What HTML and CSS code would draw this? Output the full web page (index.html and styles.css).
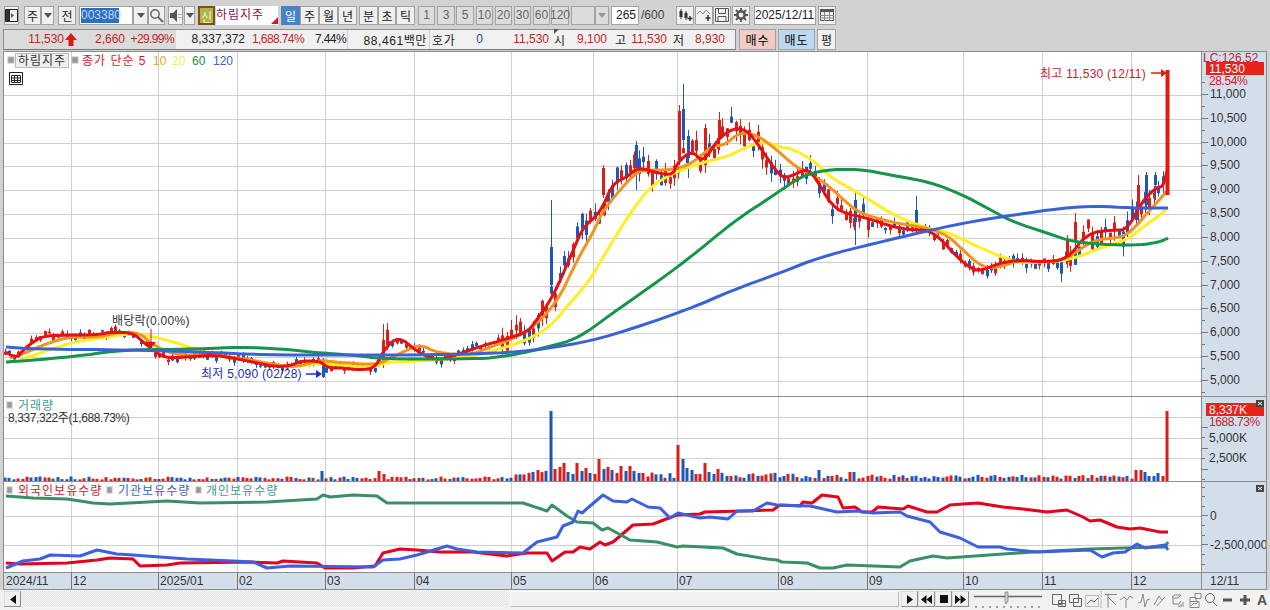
FILE: index.html
```html
<!DOCTYPE html>
<html lang="ko">
<head>
  <meta charset="UTF-8">
  <title>하림지주 차트</title>
  <link rel="stylesheet" href="styles.css">
</head>
<body>
  <div class="toolbar">
    <button class="btn w15 ml4"><svg width="13" height="13" viewBox="0 0 13 13"><path d="M.5.5h12v12H.5zM4.5.5v12" fill="none" stroke="#222"/><path d="M1 1h3v11H1z" fill="#333"/><path d="M6 4l3 2.5L6 9z" fill="#555"/></svg></button>
    <button class="btn w17 ml5">주</button>
    <button class="btn w13"><i class="tri"></i></button>
    <button class="btn w18 ml4">전</button>
    <div class="code ml3"><span class="code-sel">003380</span></div>
    <button class="btn w15"><i class="tri"></i></button>
    <button class="btn w17"><svg width="15" height="15" viewBox="0 0 15 15"><circle cx="6" cy="6" r="4.2" fill="none" stroke="#666" stroke-width="1.4"/><path d="M9 9l5 5" stroke="#666" stroke-width="2"/></svg></button>
    <button class="btn w15 ml3"><svg width="12" height="13" viewBox="0 0 12 13"><path d="M0 4h3l4-4v13L3 9H0z" fill="#555"/><path d="M9 5v1M9 8v1M11 5v1M11 8v1" stroke="#777"/></svg></button>
    <button class="btn w11 ml1"><i class="tri"></i></button>
    <button class="btn-new w17 ml3">신</button>
    <div class="stock-name">하림지주<i class="corner"></i></div>
    <button class="btn w19 ml3 on">일</button>
    <button class="btn w19">주</button>
    <button class="btn w19">월</button>
    <button class="btn w19">년</button>
    <button class="btn w19 ml2">분</button>
    <button class="btn w18">초</button>
    <button class="btn w19">틱</button>
    <button class="btn off w17 ml3">1</button>
    <button class="btn off w18 ml2">3</button>
    <button class="btn off w18 ml1">5</button>
    <button class="btn off w17 ml2">10</button>
    <button class="btn off w17 ml2">20</button>
    <button class="btn off w17 ml2">30</button>
    <button class="btn off w17 ml2">60</button>
    <button class="btn off w18 ml1">120</button>
    <div class="btn off w24 ml2"></div>
    <button class="btn off w14"><i class="tri light"></i></button>
    <div class="count ml2">265</div>
    <span class="of ml2">/600</span>
    <button class="btn w18 ml8"><svg width="15" height="14" viewBox="0 0 15 14"><path d="M3 1v10M8 3v9" stroke="#333"/><path d="M1.500 3h3v6h-3zM6.500 5h3v5h-3z" fill="#333"/><path d="M12 8v5M9.500 10.500h5" stroke="#333" stroke-width="1.500"/></svg></button>
    <button class="btn w18 ml1"><svg width="15" height="14" viewBox="0 0 15 14"><path d="M0 6l3-3 3 3 3-4 4 4" fill="none" stroke="#888"/><path d="M11 7v6M8.500 10h5" stroke="#333" stroke-width="1.500"/></svg></button>
    <button class="btn w18"><svg width="14" height="14" viewBox="0 0 14 14"><path d="M.5.5h13v13H.5z" fill="none" stroke="#555"/><path d="M3.500.5v5h7v-5M3 13V8.500h8V13" fill="none" stroke="#555"/></svg></button>
    <button class="btn w18 ml1"><svg width="14" height="14" viewBox="0 0 14 14"><circle cx="7" cy="7" r="3.700" fill="none" stroke="#555" stroke-width="2.600"/><path d="M7 0v3M7 11v3M0 7h3M11 7h3M2 2l2 2M10 10l2 2M12 2l-2 2M4 10l-2 2" stroke="#555" stroke-width="1.800"/></svg></button>
    <div class="date ml4">2025/12/11</div>
    <button class="btn w18 ml2"><svg width="14" height="12" viewBox="0 0 14 12"><path d="M.5.5h13v11H.5z" fill="none" stroke="#555"/><path d="M0 0h14v3H0z" fill="#555"/><path d="M0 6.500h14M0 9h14M4.500 3v9M9.500 3v9" stroke="#888"/></svg></button>
  </div>

  <div class="quote">
    <div class="quote-bar">
      <div class="cell cell-price">
        <span class="num up w60">11,530</span>
        <svg class="up-arrow" width="14" height="13" viewBox="0 0 14 13"><path d="M7 0l6 7H9.500v6h-5V7H1z" fill="#e01a10"/></svg>
        <span class="num up w47">2,660</span>
        <span class="num up pct w49">+29.99%</span>
      </div>
      <div class="cell cell-vol">
        <span class="num w69">8,337,372</span>
        <span class="num up pct w59">1,688.74%</span>
        <span class="num pct w42">7.44%</span>
      </div>
      <div class="cell cell-amount"><span class="num wide w79">88,461백만</span></div>
      <div class="cell cell-hoga">
        <span class="lbl wide w23 ml2">호가</span>
        <span class="num blue w28">0</span>
        <span class="num up w66">11,530</span>
        <span class="lbl lbl-open w14 ml5">시</span>
        <span class="num up w39">9,100</span>
        <span class="lbl w14 ml8">고</span>
        <span class="num up w38">11,530</span>
        <span class="lbl w14 ml6">저</span>
        <span class="num up w38">8,930</span>
      </div>
    </div>
    <button class="trade buy">매수</button>
    <button class="trade sell">매도</button>
    <button class="btn w19 ml2 avg">평</button>
  </div>

  <div class="chart">
    <div class="panel panel-main">
      <svg class="plot" width="1197" height="344" viewBox="4 52 1197 344">
        <g id="main-grid" class="grid"></g>
        <g id="candles"></g>
        <g id="ma-lines" class="lines"></g>
        <g id="last-candle"></g>
        <rect class="mark" x="8" y="57" width="6" height="6"/>
        <rect class="name-box" x="15.500" y="53.500" width="53" height="14"/>
        <text class="t han dark" x="18" y="65">하림지주</text>
        <rect class="mark" x="72" y="57" width="6" height="6"/>
        <text class="t han c-red" x="82" y="65">종가 단순 5</text>
        <text class="t c-orange" x="153" y="65">10</text>
        <text class="t c-yellow" x="172" y="65">20</text>
        <text class="t c-green" x="192" y="65">60</text>
        <text class="t c-blue" x="213" y="65">120</text>
        <path class="table-icon" d="M9.500 72.500h13v12h-13zM11.500 75.500h9v7h-9zM14.500 75.500v7M17.500 75.500v7M11.500 78h9M11.500 80.500h9"/>
        <text class="t mix dark" x="112" y="325">배당락(0.00%)</text>
        <path class="div-arrow" d="M151 329v13"/>
        <path class="div-head" d="M146 342h10l-5 6z"/>
        <text class="t mix c-low" x="201" y="378">최저 5,090 (02/28)</text>
        <path class="low-arrow" d="M306 374h11"/>
        <path class="low-head" d="M316 370l6 4-6 4z"/>
        <text class="t mix c-high" x="1040" y="78">최고 11,530 (12/11)</text>
        <path class="high-arrow" d="M1151 73h11"/>
        <path class="high-head" d="M1161 69l6 4-6 4z"/>
      </svg>
      <svg class="axis" width="64" height="344" viewBox="1202 52 64 344">
        <g id="main-ticks"></g>
        <text class="t c-high" x="1203" y="62">LC:126.52</text>
        <rect class="tag" x="1206" y="62" width="58" height="13"/>
        <text class="t white" x="1209" y="73">11,530</text>
        <text class="t tight c-high" x="1209" y="85">28.54%</text>
      </svg>
    </div>
    <div class="panel panel-vol">
      <svg class="plot" width="1197" height="84" viewBox="4 397 1197 84">
        <g id="vol-grid" class="grid"></g>
        <g id="vol-bars"></g>
        <rect class="mark" x="7" y="402" width="5" height="6"/>
        <text class="t han c-teal" x="18" y="410">거래량</text>
        <text class="t tight dark" x="8" y="422">8,337,322주(1,688.73%)</text>
      </svg>
      <svg class="axis" width="64" height="84" viewBox="1202 397 64 84">
        <g id="vol-ticks"></g>
        <rect class="tag" x="1206" y="403" width="58" height="13"/>
        <text class="t white" x="1209" y="414">8,337K</text>
        <text class="t tight c-high" x="1209" y="426">1688.73%</text>
        <text class="t dark" x="1209" y="442">5,000K</text>
        <text class="t dark" x="1209" y="462">2,500K</text>
        <rect class="close" x="1256" y="400" width="8" height="7"/>
        <path class="close-x" d="M1258 402l4 3M1262 402l-4 3"/>
      </svg>
    </div>
    <div class="panel panel-inv">
      <svg class="plot" width="1197" height="90" viewBox="4 482 1197 90">
        <g id="inv-grid" class="grid"></g>
        <g id="inv-lines" class="lines"></g>
        <rect class="mark" x="7" y="487" width="5" height="6"/>
        <text class="t han c-red" x="18" y="495">외국인보유수량</text>
        <rect class="mark" x="107" y="487" width="5" height="6"/>
        <text class="t han c-blue" x="118" y="495">기관보유수량</text>
        <rect class="mark" x="196" y="487" width="5" height="6"/>
        <text class="t han c-teal" x="206" y="495">개인보유수량</text>
      </svg>
      <svg class="axis" width="64" height="90" viewBox="1202 482 64 90">
        <g id="inv-ticks"></g>
        <text class="t dark" x="1210" y="520">0</text>
        <text class="t dark" x="1210" y="549">-2,500,000</text>
        <rect class="close" x="1256" y="485" width="8" height="7"/>
        <path class="close-x" d="M1258 487l4 3M1262 487l-4 3"/>
      </svg>
    </div>
    <div class="panel panel-x">
      <svg class="plot" width="1197" height="16" viewBox="4 573 1197 16">
        <g id="x-labels"></g>
      </svg>
      <svg class="axis" width="64" height="16" viewBox="1202 573 64 16">
        <text class="t dark" x="1210" y="585">12/11</text>
      </svg>
    </div>
  </div>

  <div class="bottom">
    <button class="sb-btn ml4"><svg width="6" height="9" viewBox="0 0 6 9"><path d="M6 0v9L0 4.500z" fill="#111"/></svg></button>
    <div class="sb-track"></div>
    <div class="sb-thumb"></div>
    <button class="sb-btn ml2"><svg width="6" height="9" viewBox="0 0 6 9"><path d="M0 0v9l6-4.500z" fill="#111"/></svg></button>
    <button class="sb-btn"><svg width="11" height="9" viewBox="0 0 11 9"><path d="M5.500 0v9L0 4.500zM11 0v9L5.500 4.500z" fill="#111"/></svg></button>
    <button class="sb-btn"><svg width="8" height="8" viewBox="0 0 8 8"><path d="M0 0h8v8H0z" fill="#111"/></svg></button>
    <button class="sb-btn"><svg width="11" height="9" viewBox="0 0 11 9"><path d="M0 0v9l5.500-4.500zM5.500 0v9L11 4.500z" fill="#111"/></svg></button>
    <svg class="slider" width="72" height="18" viewBox="0 0 72 18"><path d="M2 5.500h68" stroke="#666" stroke-width="1.500"/><path d="M33 1h3v9l-2 3-1-3z" fill="#ccc" stroke="#666" stroke-width=".6"/><path d="M4 15v2M11 15v2M18 15v2M25 15v2M32 15v2M39 15v2M46 15v2M53 15v2M60 15v2M67 15v2" stroke="#555"/></svg>
    <svg class="tools" width="226" height="18" viewBox="1046 589 226 18">
      <g class="ti">
        <path d="M1049.500 592.500h9v10h-9zM1055.500 598.500h7v6h-7zM1059 598.500v6M1055.500 601.500h7"/>
        <path d="M1066.500 592.500h9v8h-9zM1070.500 596.500h8v8h-8z"/>
        <path class="dots" d="M1082.500 593.500h13v11h-13z"/><path d="M1084 602l4-4 3 2 4-4"/>
        <path class="sep" d="M1098 589v17"/>
      </g>
      <g class="ti lt">
        <path d="M1102 592.500h12M1105 592.500v13M1105 595l8 8"/>
        <path d="M1117 598l4-3 3 3 3-4 3 2M1123 598v8"/>
        <path d="M1135 601l3-1 2-8 2 13 2-7 3-1"/>
        <path d="M1151 603l5-9 3 4 3-3M1154 604l6-7"/>
        <path d="M1169 595l3-2h6l-3 3h-5zM1170 596v6h6l2-3M1178 602v3M1180 600v5M1176 603v2"/>
        <path d="M1192 591.500h6v5h-6zM1187 595.500h6v4h-6zM1187 599.500h9v6h-9zM1188 604l3-3 2 1 2-2"/>
      </g>
      <g class="ti">
        <circle cx="1207" cy="596" r="4.500"/><path d="M1210 600l4 4"/>
      </g>
      <path class="zoom" d="M1220 598h9M1237 598h10M1242 593v10"/>
      <text class="a-font" x="1254" y="603">A</text>
    </svg>
  </div>
  <script src="chart.js"></script>
</body>
</html>
```

FILE: styles.css
```css
* { box-sizing: border-box; }
html, body { margin: 0; padding: 0; }
body { width: 1270px; height: 610px; overflow: hidden; background: #d2d2d2;
       font: 12px "Liberation Sans", "Noto Sans CJK KR", sans-serif; color: #222; }
button { font: inherit; padding: 0; margin: 0; cursor: default; }

.toolbar { display: flex; align-items: center; height: 28px; padding-top: 2px; }
.btn { height: 19px; display: flex; align-items: center; justify-content: center; flex: none;
       border: 1px solid #a2a2a2; background: #f0f0f0; color: #222; font-size: 12px; }
.btn.on { background: #4a82c4; border-color: #4a82c4; color: #fff; }
.btn.off { background: #dcdcdc; color: #666; }
.btn-new { height: 19px; flex: none; background: #b3b24a; border: 2px solid #7f4f1c; color: #f3f3c0; }
.stock-name { position: relative; width: 62px; height: 19px; flex: none; margin-left: 1px; padding-top: 1px;
              background: #fff; color: #8a1050; font-size: 12px; line-height: 16px; letter-spacing: 1px; }
.corner { position: absolute; right: 0; bottom: 1px; border-left: 7px solid transparent; border-bottom: 7px solid #d8152a; }
.tri { width: 0; height: 0; border: 4px solid transparent; border-top: 5px solid #555; border-bottom: 0; }
.tri.light { border-top-color: #999; }
.code { width: 54px; height: 19px; flex: none; background: #fff; border: 1px solid #a2a2a2; padding: 1px 0 0 1px; }
.code-sel { display: block; width: 38px; height: 15px; background: #2f6ec2; color: #bcd6f2; line-height: 15px; font-size: 12px; }
.count, .date { height: 19px; flex: none; background: #fff; border: 1px solid #a2a2a2; line-height: 17px; text-align: right; }
.count { width: 28px; padding-right: 2px; }
.of { color: #444; flex: none; width: 27px; }
.date { width: 62px; padding-right: 1px; text-align: center; }

.quote { display: flex; align-items: center; height: 22px; padding-left: 3px; }
.quote-bar { display: flex; width: 733px; height: 21px; flex: none; border: 1px solid #8d8d8d; border-bottom-color: #777; background: #f0f0f0; }
.cell { display: flex; align-items: center; height: 100%; flex: none; white-space: nowrap; }
.cell-price { width: 172px; background: #dbdbdb; }
.cell-vol { width: 171px; }
.cell-amount { width: 82px; border-left: 1px solid #d0d0d0; }
.cell-hoga { border-left: 1px solid #d0d0d0; }
.num { display: block; text-align: right; flex: none; }
.pct { letter-spacing: -.6px; }
.wide { letter-spacing: .6px; }
.lbl { display: block; flex: none; }
.lbl-open { position: relative; }
.lbl-open::before { content: ""; position: absolute; left: 0; top: -2px; border-top: 5px solid #555; border-right: 5px solid transparent; }
.up { color: #c42626; }
.blue { color: #1f4f9c; }
.up-arrow { flex: none; }
.trade { width: 37px; height: 21px; flex: none; margin-left: 3px; border: 1px solid #a2a2a2; letter-spacing: 1px; }
.trade.buy { background: #f2cbc6; }
.trade.sell { background: #bcd7f0; margin-left: 2px; }
.avg { height: 21px; }

.chart { width: 1264px; height: 539px; margin: 1px 0 0 3px; border: 1px solid #8c8c8c; background: #fff; }
.panel { display: flex; }
.panel-main { height: 345px; border-bottom: 1px solid #8c8c8c; }
.panel-vol { height: 85px; border-bottom: 1px solid #8c8c8c; }
.panel-inv { height: 91px; border-bottom: 1px solid #8c8c8c; }
.panel-x { height: 16px; background: #d3deeb; }
.plot { display: block; flex: none; width: 1197px; }
.axis { display: block; flex: none; width: 65px; background: #d3deeb; border-left: 1px solid #8c8c8c; overflow: hidden; }

.grid line { stroke: #cfcfcf; stroke-width: 1; }
.lines polyline { fill: none; stroke-width: 3; stroke-linejoin: round; }
.t { font: 12px "Liberation Sans", "Noto Sans CJK KR", sans-serif; }
.han { letter-spacing: 1px; }
.mix { letter-spacing: .25px; }
.tight { letter-spacing: -.4px; }
.dark { fill: #333; }
.white { fill: #fff; }
.c-red { fill: #cf1a2a; }
.c-orange { fill: #f0a030; }
.c-yellow { fill: #f2e85a; }
.c-green { fill: #2a8a4a; }
.c-blue { fill: #3a62c8; }
.c-low { fill: #1a2fb0; }
.c-high { fill: #cc2030; }
.c-teal { fill: #3f9a90; }
.mark { fill: #999; stroke: #bbb; }
.name-box { fill: #eee; stroke: #bbb; }
.table-icon { fill: none; stroke: #222; stroke-width: 1; }
.div-arrow { stroke: #d01820; fill: none; }
.div-head { fill: #e01018; }
.low-arrow { stroke: #1a2fd0; stroke-width: 1.5; }
.low-head { fill: #1a2fd0; }
.high-arrow { stroke: #e01a10; stroke-width: 1.5; }
.high-head { fill: #e01a10; }
.tag { fill: #e6241a; }
.close { fill: #444; }
.close-x { stroke: #fff; fill: none; }
.tick { stroke: #777; stroke-width: 1; }

.bottom { display: flex; align-items: flex-start; height: 21px; padding-top: 1px; background: #f1f1f1; }
.sb-btn { width: 17px; height: 16px; flex: none; display: flex; align-items: center; justify-content: center;
          background: #f0f0f0; border: 1px solid #8c8c8c; border-top-color: #ddd; border-left-color: #ddd; }
.sb-track { width: 489px; height: 16px; flex: none; background: repeating-conic-gradient(#e2e2e2 0 25%, #f6f6f6 0 50%) 0 0 / 2px 2px; }
.sb-thumb { width: 389px; height: 16px; flex: none; background: #f2f2f2; border: 1px solid #bbb; border-top-color: #fff; border-left-color: #fff; }
.slider { flex: none; margin-left: 3px; }
.tools { flex: none; margin-left: 5px; }
.ti path, .ti circle { fill: none; stroke: #666; stroke-width: 1; }
.ti.lt path { stroke: #888; }
.ti .dots { stroke-dasharray: 1 1; stroke: #888; }
.ti .sep { stroke: #bbb; }
.zoom { stroke: #555; stroke-width: 3; fill: none; }
.a-font { font: bold 14px "Liberation Sans", sans-serif; fill: #555; }

.ml1 { margin-left: 1px; } .ml2 { margin-left: 2px; } .ml3 { margin-left: 3px; } .ml4 { margin-left: 4px; }
.ml5 { margin-left: 5px; } .ml6 { margin-left: 6px; } .ml8 { margin-left: 8px; }
.w11 { width: 11px; } .w13 { width: 13px; } .w14 { width: 14px; } .w15 { width: 15px; } .w17 { width: 17px; }
.w18 { width: 18px; } .w19 { width: 19px; } .w23 { width: 23px; } .w24 { width: 24px; } .w28 { width: 28px; }
.w38 { width: 38px; } .w39 { width: 39px; } .w42 { width: 42px; } .w47 { width: 47px; } .w49 { width: 49px; }
.w59 { width: 59px; } .w60 { width: 60px; } .w66 { width: 66px; } .w69 { width: 69px; } .w79 { width: 79px; }
```

FILE: chart.js
```js
const NS = 'http://www.w3.org/2000/svg';
const byId = id => document.getElementById(id);
const gridX = [71, 158, 237, 325, 414, 511, 593, 677, 778, 867, 963, 1042, 1131];

const ma5 = '5,352 17,358 23,350 33,342 43,336 67,335 93,335 113,332 133,333 143,342 157,353 167,358 187,357 213,355 233,358 257,363 277,367 293,365 300,361 320,361 328,368 343,368 360,370 375,368 382,353 393,340 402,339 413,348 423,355 438,360 450,357 470,350 485,345 503,340 527,332 533,325 553,297 572,253 583,227 600,213 613,183 627,177 638,167 657,173 673,175 677,163 692,150 703,163 717,140 733,128 747,130 760,147 780,177 790,177 807,168 817,180 830,203 843,213 867,218 893,227 913,230 927,230 940,238 957,257 973,270 983,270 1000,263 1020,260 1040,262 1067,260 1087,233 1113,230 1127,230 1143,200 1157,187 1163,187 1168,167';
const ma10 = '10,358 20,355 43,345 67,337 100,337 120,332 140,333 150,343 173,355 213,355 240,358 277,365 297,367 320,360 333,362 377,365 390,358 403,352 420,344 437,353 470,355 483,350 527,333 557,303 577,260 593,233 603,210 633,175 643,170 673,170 693,163 713,145 723,146 740,132 757,135 777,150 797,168 813,175 830,187 847,203 860,213 890,222 927,228 947,235 963,250 983,268 1000,267 1020,260 1050,262 1070,257 1093,240 1117,238 1130,233 1150,210 1168,190';
const ma20 = '20,360 43,352 73,342 100,338 133,333 160,338 193,348 213,355 233,358 260,363 293,367 320,363 337,365 373,368 387,362 400,362 467,358 503,348 527,340 550,327 570,303 590,280 603,257 630,213 650,187 673,173 700,163 727,157 750,145 767,142 783,148 790,148 813,160 830,177 853,190 873,202 897,217 927,228 947,232 970,243 997,255 1020,263 1043,262 1070,260 1100,248 1127,240 1143,227 1160,215 1168,208';
const ma60 = '6,362 37,360 87,355 120,350 200,349 240,347 283,349 320,353 353,355 383,359 463,359 493,358 523,353 547,347 570,341 587,332 610,315 650,287 687,260 733,222 777,193 800,177 823,170 860,169 890,175 930,182 963,195 987,208 1013,222 1047,233 1073,242 1113,245 1140,245 1160,242 1168,238';
const ma120 = '6,347 33,349 133,350 200,352 267,355 333,355 420,355 470,354 520,352 570,345 610,336 687,310 733,290 780,273 820,257 880,242 923,232 963,223 1013,215 1063,208 1097,206 1130,208 1168,208';

const foreign = '6,563 20,564 67,563 97,560 110,558 133,559 140,566 167,565 180,563 250,562 277,563 283,561 317,563 325,568 353,568 375,566 383,553 400,549 417,550 440,552 473,552 490,554 507,556 527,553 547,553 552,561 565,552 573,552 580,547 590,549 600,542 605,545 613,542 633,525 653,524 677,515 700,514 705,512 742,511 773,510 780,505 800,506 803,502 812,503 822,495 838,497 843,508 855,507 862,512 872,512 878,507 890,508 903,509 908,506 927,512 937,512 950,505 963,504 978,503 1003,507 1023,509 1047,512 1067,510 1083,517 1090,521 1100,520 1117,527 1130,529 1140,528 1160,532 1168,532';
const inst = '6,568 23,561 40,559 50,555 80,556 97,550 117,554 133,555 187,559 233,561 253,562 267,568 290,566 373,567 383,560 400,559 417,555 447,546 457,549 477,552 523,553 537,542 557,537 563,526 573,522 578,511 582,513 590,506 603,495 613,501 627,502 632,499 648,507 660,508 670,518 678,513 700,518 710,517 728,519 737,511 753,511 767,503 777,505 810,506 837,512 857,511 873,513 900,512 907,516 930,522 940,532 960,538 978,547 1000,547 1007,549 1037,552 1090,550 1102,557 1113,553 1125,552 1137,544 1145,548 1165,545 1168,550';
const indiv = '6,496 33,498 67,499 93,503 110,504 167,501 200,503 267,502 317,499 323,495 330,497 353,495 377,496 387,503 440,503 523,503 547,511 552,505 567,516 577,522 593,523 602,530 608,528 630,540 657,542 677,547 683,546 723,548 737,554 767,559 777,560 782,562 807,563 820,568 833,568 847,565 900,567 910,561 933,556 947,558 1003,554 1033,552 1090,549 1123,548 1165,547 1168,542';

function add(parent, name, attrs) {
  const el = document.createElementNS(NS, name);
  Object.keys(attrs).forEach(k => el.setAttribute(k, attrs[k]));
  parent.appendChild(el);
  return el;
}

function hLine(g, y) { add(g, 'line', { x1: 4, x2: 1201, y1: y, y2: y }); }
function vLines(g, y1, y2) {
  gridX.forEach(x => add(g, 'line', { x1: x + .5, x2: x + .5, y1: y1, y2: y2 }));
}

function drawGrid() {
  const main = byId('main-grid');
  for (let i = 0; i < 13; i++) hLine(main, Math.round(95 + i * 23.83) + .5);
  vLines(main, 52, 396);
  const vol = byId('vol-grid');
  [417.5, 438.5, 458.5].forEach(y => hLine(vol, y));
  vLines(vol, 397, 481);
  const inv = byId('inv-grid');
  [516.5, 545.5].forEach(y => hLine(inv, y));
  vLines(inv, 482, 572);
}

function points(str) {
  return str.split(' ').map(p => p.split(',').map(Number));
}

// corner cutting so the moving averages come out as curves
function smooth(str) {
  let pts = points(str);
  for (let n = 0; n < 2; n++) {
    const out = [pts[0]];
    for (let i = 0; i < pts.length - 1; i++) {
      const a = pts[i], b = pts[i + 1];
      out.push([a[0] * .75 + b[0] * .25, a[1] * .75 + b[1] * .25]);
      out.push([a[0] * .25 + b[0] * .75, a[1] * .25 + b[1] * .75]);
    }
    out.push(pts[pts.length - 1]);
    pts = out;
  }
  return pts.map(p => p[0].toFixed(1) + ',' + p[1].toFixed(1)).join(' ');
}

function drawLines(g, list) {
  list.forEach(l => add(g, 'polyline', { points: l[0], stroke: l[1] }));
}

function interp(pts, x) {
  for (let i = 1; i < pts.length; i++) {
    if (x <= pts[i][0]) {
      const a = pts[i - 1], b = pts[i];
      return a[1] + (b[1] - a[1]) * (x - a[0]) / (b[0] - a[0]);
    }
  }
  return pts[pts.length - 1][1];
}

let seed = 20251211;
function rnd() {
  seed = (seed * 1664525 + 1013904223) % 4294967296;
  return seed / 4294967296;
}

const RED = '#d8201a', BLUE = '#1f56b8';
function candle(g, x, top, bottom, wickTop, wickBottom, color) {
  add(g, 'line', { x1: x, x2: x, y1: wickTop, y2: wickBottom, stroke: color });
  add(g, 'rect', { x: x - 1.5, y: top, width: 3, height: Math.max(bottom - top, 1.5), fill: color });
}

const STEP = (1167 - 5) / 264;
function amp(x) {
  if (x < 500) return .7;
  if (x < 800) return 2;
  if (x < 870) return 1.6;
  if (x < 1060) return 1;
  return 2;
}

// special days that stand out on the chart: x, body top, bottom, wick top, bottom, colour
const specials = [
  [323, 361, 377, 358, 378, BLUE], [383, 340, 365, 324, 368, RED], [387, 330, 345, 323, 350, RED],
  [551, 247, 285, 200, 290, BLUE], [679, 111, 160, 105, 165, RED], [683, 109, 140, 84, 150, BLUE],
  [688, 136, 158, 130, 178, BLUE], [705, 128, 164, 124, 168, RED], [719, 120, 138, 112, 150, RED],
  [636, 145, 168, 141, 190, BLUE], [603, 168, 195, 165, 198, RED], [916, 210, 225, 196, 232, BLUE],
  [855, 200, 222, 190, 245, BLUE], [1067, 240, 262, 235, 268, RED], [1075, 222, 240, 213, 250, RED],
  [1146, 175, 205, 172, 210, BLUE], [1155, 175, 185, 172, 200, BLUE], [1138, 185, 210, 175, 222, RED]
];

function drawCandles() {
  const g = byId('candles');
  const pts = points(ma5);
  for (let i = 0; i < 264; i++) {
    const x = Math.round(5 + i * STEP) + .5;
    const a = amp(x);
    const mid = interp(pts, x) + (rnd() - .5) * 10 * a;
    const h = (2 + rnd() * 6) * a;
    const over = rnd();
    candle(g, x, mid - h / 2, mid + h / 2, mid - h / 2 - rnd() * 5 * a, mid + h / 2 + rnd() * 5 * a, over < .55 ? RED : BLUE);
  }
  specials.forEach(s => candle(g, s[0] + .5, s[1], s[2], s[3], s[4], s[5]));
  add(byId('last-candle'), 'rect', { x: 1165.5, y: 70, width: 4, height: 125, fill: '#e01a10' });
}

// volume bars: known heights by x, the rest from a random base
const volumes = {
  323: [10, BLUE], 380: [10, RED], 383: [7, RED],
  551: [70, BLUE], 556: [12, RED], 560: [14, RED], 564: [18, RED], 569: [9, BLUE], 573: [7, BLUE],
  577: [18, RED], 582: [10, BLUE], 586: [13, RED], 591: [8, BLUE], 595: [7, RED], 600: [22, RED],
  604: [12, BLUE], 608: [14, RED], 613: [11, BLUE], 617: [8, RED], 622: [15, RED], 626: [10, BLUE],
  630: [15, RED], 635: [10, BLUE], 639: [8, BLUE], 679: [36, RED], 683: [22, BLUE], 687: [13, BLUE],
  692: [11, BLUE], 696: [7, RED], 700: [7, RED], 705: [18, RED], 709: [9, BLUE], 714: [7, BLUE],
  718: [12, RED], 820: [11, BLUE], 849: [9, RED], 855: [9, BLUE], 1137: [11, RED], 1141: [11, RED],
  1145: [9, BLUE], 1150: [5, BLUE], 1154: [5, BLUE], 1158: [8, BLUE], 1163: [5, RED], 1167: [70, RED]
};

function drawVolume() {
  const g = byId('vol-bars');
  for (let i = 0; i <= 264; i++) {
    const x = Math.round(5 + i * STEP);
    let known = null;
    for (let d = -1; d <= 1; d++) if (volumes[x + d]) known = volumes[x + d];
    let h, color;
    if (known) {
      h = known[0]; color = known[1];
    } else {
      const ramp = x > 510 && x < 551 ? 1 + (x - 510) / 12 : x > 551 && x < 800 ? 2 : x > 800 ? 1.5 : 1;
      h = (1.5 + rnd() * 3) * ramp;
      color = rnd() < .5 ? RED : BLUE;
    }
    add(g, 'rect', { x: x - 1.5, y: 481 - h, width: 3, height: h, fill: color });
  }
}

function drawTicks() {
  const main = byId('main-ticks');
  for (let i = 0; i < 27; i++) {
    const y = Math.round(83 + i * 11.915) - .5;
    add(main, 'line', { class: 'tick', x1: 1202, x2: i % 2 ? 1208 : 1205, y1: y, y2: y });
  }
  for (let i = 0; i < 13; i++) {
    const v = 11000 - i * 500;
    const t = add(main, 'text', { class: 't dark', x: 1210, y: 98 + i * 23.83 });
    t.textContent = v.toLocaleString('en-US');
  }
  const vol = byId('vol-ticks');
  [427, 437, 448, 458, 469, 479].forEach((y, i) =>
    add(vol, 'line', { class: 'tick', x1: 1202, x2: i % 2 ? 1205 : 1208, y1: y + .5, y2: y + .5 }));
  const inv = byId('inv-ticks');
  [487, 496, 506, 515, 525, 535, 544, 554, 564].forEach((y, i) =>
    add(inv, 'line', { class: 'tick', x1: 1202, x2: i === 3 || i === 6 ? 1208 : 1205, y1: y + .5, y2: y + .5 }));
}

function drawXLabels() {
  const g = byId('x-labels');
  const names = ['12', '2025/01', '02', '03', '04', '05', '06', '07', '08', '09', '10', '11', '12'];
  add(g, 'text', { class: 't dark', x: 6, y: 585 }).textContent = '2024/11';
  gridX.forEach((x, i) => {
    add(g, 'line', { class: 'tick', x1: x + .5, x2: x + .5, y1: 573, y2: 589 });
    add(g, 'text', { class: 't dark', x: x + 2, y: 585 }).textContent = names[i];
  });
}

drawGrid();
drawCandles();
drawLines(byId('ma-lines'), [
  [smooth(ma20), '#ffee22'], [smooth(ma10), '#f5921e'], [smooth(ma5), '#e60f12'],
  [smooth(ma60), '#15944a'], [smooth(ma120), '#3a62d8']
]);
drawVolume();
drawLines(byId('inv-lines'), [[foreign, '#e6001e'], [indiv, '#3b8f68'], [inst, '#3c60e0']]);
drawTicks();
drawXLabels();
```
